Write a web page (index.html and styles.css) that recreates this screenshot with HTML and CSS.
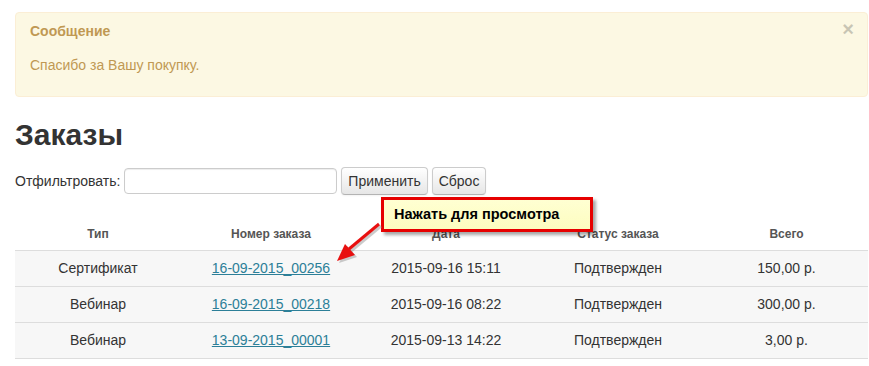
FILE: index.html
```html
<!DOCTYPE html>
<html lang="ru">
<head>
  <meta charset="UTF-8" />
  <title>Заказы</title>
  <link rel="stylesheet" href="styles.css">
</head>
<body>
  <div class="alert">
    <div class="alert-head">
      <h4>Сообщение</h4>
      <span class="close">&times;</span>
    </div>
    <p>Спасибо за Вашу покупку.</p>
  </div>

  <h2>Заказы</h2>

  <form class="filter">
    <label for="filter">Отфильтровать:</label>
    <input type="text" id="filter">
    <button type="button">Применить</button>
    <button type="button">Сброс</button>
  </form>

  <table class="orders">
    <colgroup>
      <col class="col-type">
      <col class="col-number">
      <col class="col-date">
      <col class="col-status">
      <col>
    </colgroup>
    <tr>
      <th>Тип</th>
      <th>Номер заказа</th>
      <th>Дата</th>
      <th>Статус заказа</th>
      <th>Всего</th>
    </tr>
    <tr>
      <td>Сертификат</td>
      <td><a href="#">16-09-2015_00256</a></td>
      <td>2015-09-16 15:11</td>
      <td>Подтвержден</td>
      <td>150,00 р.</td>
    </tr>
    <tr>
      <td>Вебинар</td>
      <td><a href="#">16-09-2015_00218</a></td>
      <td>2015-09-16 08:22</td>
      <td>Подтвержден</td>
      <td>300,00 р.</td>
    </tr>
    <tr>
      <td>Вебинар</td>
      <td><a href="#">13-09-2015_00001</a></td>
      <td>2015-09-13 14:22</td>
      <td>Подтвержден</td>
      <td>3,00 р.</td>
    </tr>
  </table>

  <!-- annotation over the screenshot -->
  <div class="callout">Нажать для просмотра</div>
  <svg class="arrow" width="60" height="50" viewBox="0 0 60 50">
    <line x1="46" y1="6" x2="16" y2="31" stroke="#999" stroke-width="3" opacity="0.5" transform="translate(2,2)"/>
    <polygon points="4,43 12,26 22,37" fill="#999" opacity="0.5" transform="translate(2,2)"/>
    <line x1="46" y1="6" x2="16" y2="31" stroke="#e81010" stroke-width="3"/>
    <polygon points="4,43 12,26 22,37" fill="#e81010"/>
  </svg>
</body>
</html>
```

FILE: styles.css
```css
body {
  margin: 0;
  padding: 12px 1px 0 15px;
  font-family: "Liberation Sans", Arial, sans-serif;
  font-size: 14px;
  line-height: 20px;
  color: #333;
  background: #fff;
  position: relative;
}
.alert {
  background: #fcf8e3;
  border: 1px solid #fbeed5;
  border-radius: 4px;
  color: #c09853;
  padding: 8px 13px 8px 14px;
}
.alert-head {
  display: flex;
  justify-content: space-between;
  align-items: center;
}
.alert h4 {
  margin: 0;
  font-size: 14px;
  line-height: 20px;
}
.alert p {
  margin: 14px 0 13px;
}
.close {
  font-size: 20px;
  font-weight: bold;
  line-height: 20px;
  color: #000;
  opacity: 0.2;
  margin-top: -4px;
}
h2 {
  margin: 18px 0 12px;
  font-size: 30px;
  line-height: 40px;
  color: #333;
}
.filter {
  display: flex;
  align-items: center;
  gap: 4px;
  margin: 0;
}
.filter input {
  width: 201px;
  height: 16px;
  padding: 4px 5px;
  border: 1px solid #ccc;
  border-radius: 4px;
  box-shadow: inset 0 1px 1px rgba(0, 0, 0, 0.075);
  font: inherit;
}
.filter button {
  font: inherit;
  color: #333;
  padding: 3px 6px;
  border: 1px solid #ccc;
  border-bottom-color: #b3b3b3;
  border-radius: 4px;
  background: linear-gradient(#fff, #e6e6e6);
  box-shadow: inset 0 1px 0 rgba(255, 255, 255, 0.2), 0 1px 2px rgba(0, 0, 0, 0.05);
}
.orders {
  width: 100%;
  margin-top: 22px;
  border-collapse: collapse;
  table-layout: fixed;
}
.col-type { width: 166px; }
.col-number { width: 180px; }
.col-date { width: 170px; }
.col-status { width: 174px; }
.orders th {
  font-size: 12px;
  line-height: 18px;
  padding: 8px 8px 7px;
  color: #555;
}
.orders td {
  text-align: center;
  line-height: 19px;
  padding: 8px;
  border-top: 1px solid #ddd;
  border-bottom: 1px solid #ddd;
  background: #f7f7f7;
}
.orders a {
  color: #2c7f98;
  text-decoration: underline;
}
.callout {
  position: absolute;
  left: 381px;
  top: 197px;
  width: 196px;
  height: 29px;
  padding-left: 10px;
  border: 3px solid #e60000;
  background: linear-gradient(#ffffd2, #fdfdc0);
  box-shadow: 3px 3px 3px rgba(0, 0, 0, 0.35);
  font-weight: bold;
  font-size: 14.5px;
  color: #000;
  line-height: 29px;
}
.arrow {
  position: absolute;
  left: 333px;
  top: 218px;
}
```
